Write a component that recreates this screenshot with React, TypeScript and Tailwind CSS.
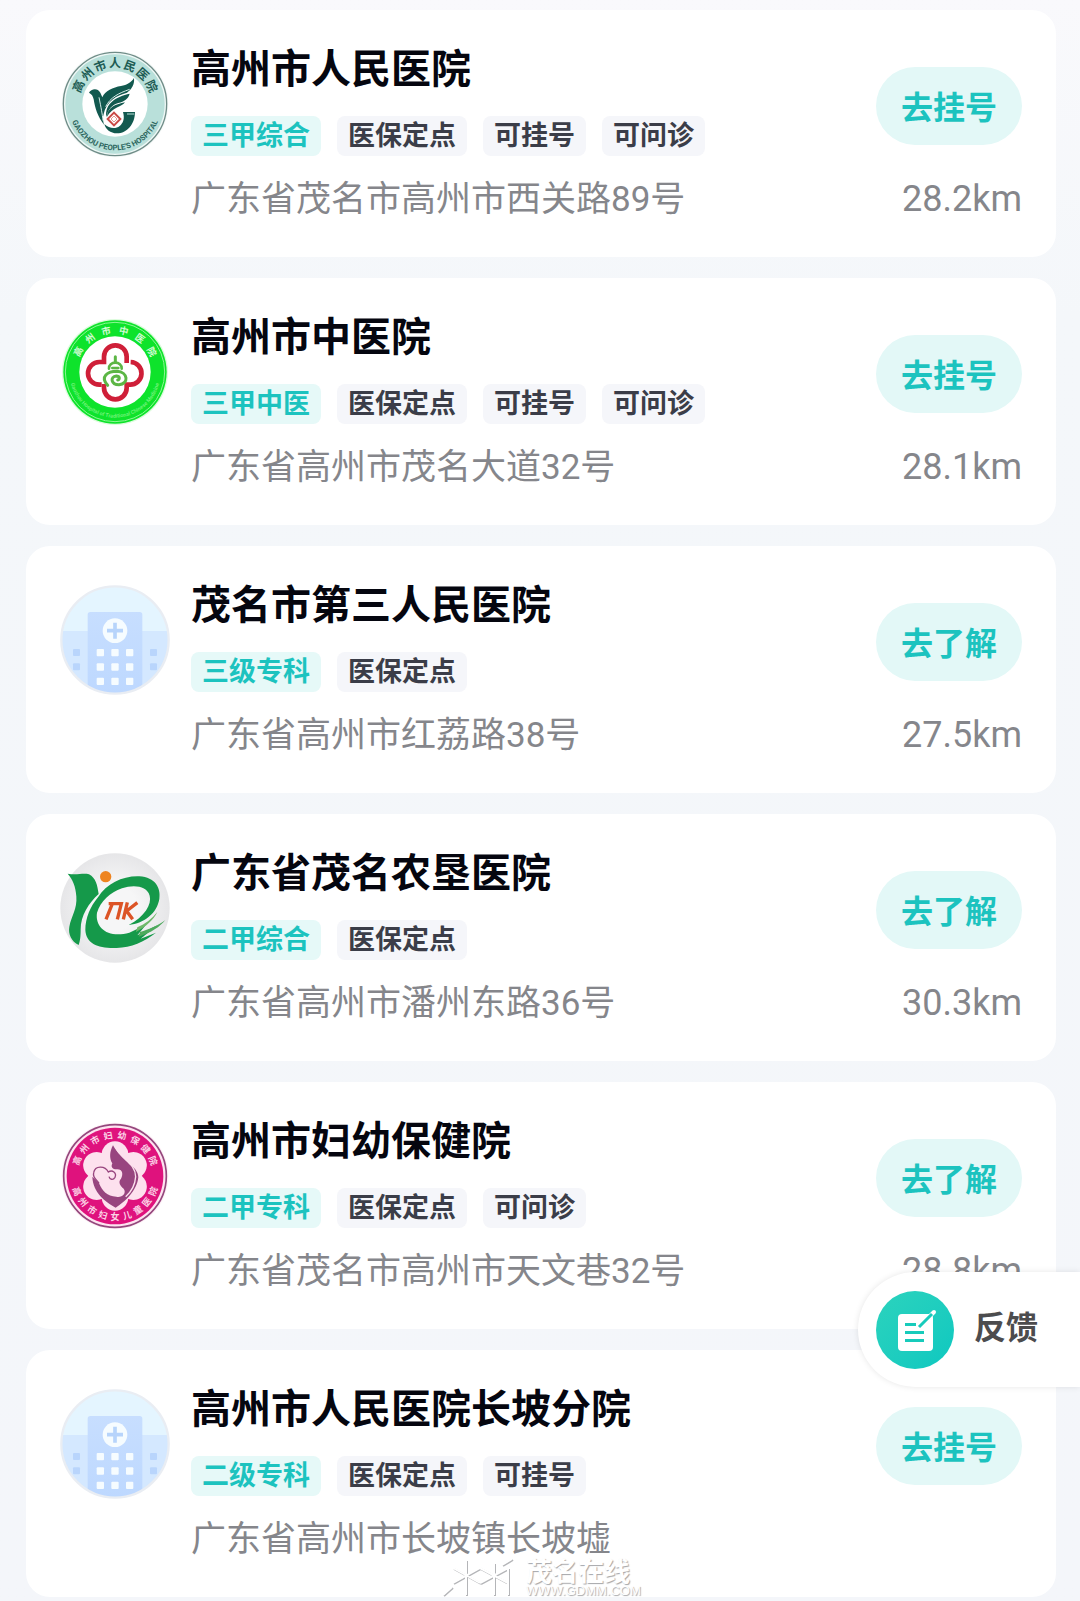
import type { ReactNode } from "react";

type Hospital = {
  id: number;
  name: string;
  level: string;
  tags: string[];
  address: string;
  distance?: string;
  action: string;
  logo: ReactNode;
};

type RingTextProps = {
  text: string;
  radius: number;
  spread: number;
  size: number;
  color: string;
  bottom?: boolean;
};

// One character per step around a badge, centered on 0,0
function RingText({ text, radius, spread, size, color, bottom }: RingTextProps) {
  const step = (spread * 2) / (text.length - 1);
  return (
    <g fill={color} fontSize={size} fontWeight={700} textAnchor="middle">
      {text.split("").map((char, i) => {
        const angle = bottom ? spread - i * step : -spread + i * step;
        return (
          <text
            key={i}
            y={(bottom ? radius : -radius) + Math.round(size * 0.36)}
            transform={`rotate(${angle})`}
          >
            {char}
          </text>
        );
      })}
    </g>
  );
}

function PeopleLogo() {
  return (
    <svg viewBox="-165 -165 330 330" className="size-full" aria-hidden="true">
      <circle r="160" fill="#f4f8f7" />
      <circle r="155" fill="#eef8f6" stroke="#6f8c87" strokeWidth="4" />
      <circle r="149" fill="#b9e0da" />
      <circle r="98" fill="#fff" />
      <RingText text="高州市人民医院" radius={122} spread={64} size={36} color="#1d5c54" />
      <path id="people-arc" d="M-139 0 A139 139 0 0 0 139 0" fill="none" />
      <text fontSize="23" fontWeight="700" fill="#2c665e" textAnchor="middle">
        <textPath href="#people-arc" startOffset="50%">
          GAOZHOU PEOPLE&apos;S HOSPITAL
        </textPath>
      </text>
      <g fill="#12594f">
        <path d="M-78 -34 C-72 -46 -52 -50 -44 -34 L-38 -20 C-30 -40 -6 -50 18 -54 C36 -57 48 -64 57 -78 C59 -58 50 -44 36 -34 C4 -26 -26 -8 -34 30 C-38 42 -36 50 -33 62 C-52 38 -60 12 -64 -14 C-66 -24 -70 -30 -78 -34Z" />
        <path d="M44 -31 C40 -16 28 -7 10 -3 C-8 2 -22 16 -26 40 C-32 -2 4 -22 44 -31Z" />
        <path d="M30 -5 C22 8 -8 10 -24 38 C-24 10 4 0 30 -5Z" />
        <path d="M24 24 H60 C60 60 36 88 6 88 C-14 88 -28 76 -32 60 C-18 74 2 76 14 66 C24 58 30 44 24 24Z" />
      </g>
      <path d="M-48 -20 C-42 10 -38 30 -36 50 M-28 8 C-14 -20 10 -32 44 -44" fill="none" stroke="#d5ebe7" strokeWidth="3" />
      <path d="M36 30 H58" stroke="#b9e0da" strokeWidth="3" />
      <path d="M-3 26 L16 45 L-3 64 L-22 45Z" fill="#fff" stroke="#c94a46" strokeWidth="6" />
      <path d="M-3 36 L6 45 L-3 54 L-12 45Z" fill="#fff" stroke="#e19a94" strokeWidth="3" />
    </svg>
  );
}

function ChineseMedicineLogo() {
  return (
    <svg viewBox="-165 -165 330 330" className="size-full" aria-hidden="true">
      <circle r="159" fill="#dcfcdc" />
      <circle r="155" fill="#0ee32b" />
      <circle r="149" fill="none" stroke="#8df795" strokeWidth="3" />
      <circle r="107" fill="#fff" />
      <RingText text="高州市中医院" radius={126} spread={61} size={28} color="#d2fbd4" />
      <path id="tcm-arc" d="M-137 0 A137 137 0 0 0 137 0" fill="none" />
      <text fontSize="16" fontWeight="700" fill="#6df277" textAnchor="middle">
        <textPath href="#tcm-arc" startOffset="50%">
          Gaozhou Hospital of Traditional Chinese Medicine
        </textPath>
      </text>
      <g fill="none" stroke="#cf1f38" strokeWidth="14">
        <path d="M35 -27 V-46 A34 34 0 0 0 -33 -46 V-30 H-47 A34 34 0 0 0 -47 38 H-40" />
        <path d="M-33 36 V48 A34 34 0 0 0 35 48 V38 H44 A34 34 0 0 0 47 -30" />
      </g>
      <g fill="none" stroke="#5cb645" strokeLinecap="round">
        <path d="M-18 -10 C-20 -34 22 -34 20 -10 M-8 -12 H10" strokeWidth="8" />
        <path d="M-22 40 C-46 14 -22 -2 6 -2 C40 0 42 36 12 38 C-12 38 -16 14 4 12 C14 12 16 22 8 24" strokeWidth="9" />
        <path d="M1 -46 V-32" strokeWidth="9" />
      </g>
    </svg>
  );
}

function DefaultLogo() {
  return (
    <svg viewBox="-165 -165 330 330" className="size-full" aria-hidden="true">
      <defs>
        <clipPath id="default-clip">
          <circle r="160" />
        </clipPath>
        <linearGradient id="default-tower" x1="0" y1="0" x2="0" y2="1">
          <stop offset="0" stopColor="#c7deff" />
          <stop offset="1" stopColor="#bdd8ff" />
        </linearGradient>
      </defs>
      <g clipPath="url(#default-clip)">
        <rect x="-165" y="-165" width="330" height="330" fill="#e4f5ff" />
        <rect x="-165" y="-27" width="330" height="200" fill="#d4e8ff" />
        <path d="M-82 165 V-76 Q-82 -84 -74 -84 H74 Q82 -84 82 -76 V165Z" fill="url(#default-tower)" />
        <g fill="#b9d5fc">
          <rect x="-126" y="27" width="21" height="21" rx="3" />
          <rect x="-126" y="70" width="21" height="21" rx="3" />
          <rect x="105" y="27" width="21" height="21" rx="3" />
          <rect x="105" y="70" width="21" height="21" rx="3" />
        </g>
        <g fill="#f6fcff">
          {[27, 70, 113].map((y) =>
            [-55, -11, 33].map((x) => (
              <rect key={`${x}-${y}`} x={x} y={y} width="22" height="22" rx="3" />
            )),
          )}
        </g>
      </g>
      <circle cy="-28" r="37" fill="#f6fcff" />
      <path d="M0 -52 V-4 M-24 -28 H24" stroke="#b7d4fb" strokeWidth="11" />
      <circle r="161" fill="none" stroke="#e9edf3" strokeWidth="7" />
    </svg>
  );
}

function FarmLogo() {
  return (
    <svg viewBox="30 25 330 330" className="size-full" aria-hidden="true">
      <defs>
        <radialGradient id="farm-bg">
          <stop offset="0.4" stopColor="#f6f6f7" />
          <stop offset="1" stopColor="#e6e6e8" />
        </radialGradient>
      </defs>
      <circle cx="195" cy="190" r="164" fill="url(#farm-bg)" />
      <circle cx="167" cy="96" r="17" fill="#ee8420" />
      <g fill="#15994a">
        <path d="M53 87 C80 92 100 84 117 89 C138 100 142 122 146 148 C116 176 92 212 92 254 C92 276 90 290 86 301 C64 290 54 268 58 246 C64 214 82 194 79 155 C77 125 68 104 53 87Z" />
        <path d="M144 158 C170 116 220 93 268 95 C316 98 333 130 328 163 C321 205 284 236 236 241 C284 216 306 178 299 153 C291 124 252 119 216 131 C180 144 152 170 141 204 C134 250 176 282 238 264 L288 240 L262 272 L322 242 L272 282 L318 264 C282 292 244 308 200 310 C146 312 108 298 106 256 C106 220 122 184 144 158Z" />
      </g>
      <path d="M258 262 C290 244 310 226 322 202 C306 222 286 238 262 248Z" fill="#6fb86a" />
      <path d="M266 276 C304 264 330 246 346 226 C326 242 296 254 270 262Z" fill="#4da95c" />
      <g fill="none" stroke="#dc5426" strokeWidth="10">
        <path d="M176 177 H214 L202 224 M186 180 L168 224" />
        <path d="M232 173 L220 224 M262 174 L230 199 L248 224" />
      </g>
    </svg>
  );
}

function MaternityLogo() {
  return (
    <svg viewBox="-165 -165 330 330" className="size-full" aria-hidden="true">
      <circle r="160" fill="#fdf0f6" />
      <circle r="154" fill="#fde3f0" stroke="#95477d" strokeWidth="5" />
      <circle r="145" fill="#df127d" />
      <g fill="#fde1ee">
        <circle r="80" />
        {[0, 60, 120, 180, 240, 300].map((angle) => (
          <circle key={angle} cy="-64" r="40" transform={`rotate(${angle})`} />
        ))}
      </g>
      <RingText text="高州市妇幼保健院" radius={123} spread={68} size={27} color="#fbd3e6" />
      <RingText text="高州市妇女儿童医院" radius={123} spread={68} size={27} color="#fbd3e6" bottom />
      <path d="M-6 -92 C-16 -74 -18 -52 -8 -38 C-14 -26 -6 -20 4 -20 C22 -22 26 -6 18 8 C8 18 16 30 26 38 C36 52 20 66 4 62 C-24 62 -38 44 -48 22 L-68 2 C-66 50 -30 76 2 95 C30 78 66 44 70 4 C70 -30 18 -46 -6 -92Z" fill="#98457f" />
      <path d="M2 -88 C12 -52 62 -40 62 2 C60 30 46 50 32 62" fill="none" stroke="#fde1ee" strokeWidth="4" />
      <path d="M-64 -10 C-60 -32 -30 -32 -20 -12 C-8 -20 6 -10 0 4 C-6 14 -16 10 -18 2 M-48 22 C-54 10 -68 8 -64 -10" fill="none" stroke="#98457f" strokeWidth="4" />
    </svg>
  );
}

function FeedbackIcon() {
  return (
    <svg viewBox="0 0 78 78" className="size-full" aria-hidden="true">
      <rect x="22" y="23" width="35" height="37" rx="4" fill="#fff" />
      <path d="M29 33.500 H40 M29 41.500 H48 M29 49.500 H48" stroke="#17cbbb" strokeWidth="3" />
      <path d="M43 36 L58 21" stroke="#fff" strokeWidth="4" strokeLinecap="round" />
      <path d="M43 36 L56 23" stroke="#17cbbb" strokeWidth="3" />
    </svg>
  );
}

const HOSPITALS: Hospital[] = [
  {
    id: 1,
    name: "高州市人民医院",
    level: "三甲综合",
    tags: ["医保定点", "可挂号", "可问诊"],
    address: "广东省茂名市高州市西关路89号",
    distance: "28.2km",
    action: "去挂号",
    logo: <PeopleLogo />,
  },
  {
    id: 2,
    name: "高州市中医院",
    level: "三甲中医",
    tags: ["医保定点", "可挂号", "可问诊"],
    address: "广东省高州市茂名大道32号",
    distance: "28.1km",
    action: "去挂号",
    logo: <ChineseMedicineLogo />,
  },
  {
    id: 3,
    name: "茂名市第三人民医院",
    level: "三级专科",
    tags: ["医保定点"],
    address: "广东省高州市红荔路38号",
    distance: "27.5km",
    action: "去了解",
    logo: <DefaultLogo />,
  },
  {
    id: 4,
    name: "广东省茂名农垦医院",
    level: "二甲综合",
    tags: ["医保定点"],
    address: "广东省高州市潘州东路36号",
    distance: "30.3km",
    action: "去了解",
    logo: <FarmLogo />,
  },
  {
    id: 5,
    name: "高州市妇幼保健院",
    level: "二甲专科",
    tags: ["医保定点", "可问诊"],
    address: "广东省茂名市高州市天文巷32号",
    distance: "28.8km",
    action: "去了解",
    logo: <MaternityLogo />,
  },
  {
    id: 6,
    name: "高州市人民医院长坡分院",
    level: "二级专科",
    tags: ["医保定点", "可挂号"],
    address: "广东省高州市长坡镇长坡墟",
    action: "去挂号",
    logo: <DefaultLogo />,
  },
];

function HospitalCard({ hospital }: { hospital: Hospital }) {
  return (
    <li className="flex rounded-3xl bg-white px-[34px] pt-[34px] pb-[31px]">
      <div className="mt-[5px] mr-[21px] size-[110px] shrink-0">{hospital.logo}</div>

      <div className="min-w-0 flex-1">
        <h2 className="text-[40px] leading-[52px] font-bold text-[#05060f]">{hospital.name}</h2>
        <div className="mt-5 flex gap-4 text-[27px] leading-[40px] font-bold">
          <span className="rounded-lg bg-[#e6f9f8] px-[11px] text-[#1cc3bf]">{hospital.level}</span>
          {hospital.tags.map((tag) => (
            <span key={tag} className="rounded-lg bg-[#f5f6fa] px-[11px] text-[#3b3d48]">
              {tag}
            </span>
          ))}
        </div>
        <p className="mt-[18px] text-[35px] leading-[52px] text-[#85868b]">{hospital.address}</p>
      </div>

      <div className="flex shrink-0 flex-col items-end pt-[23px]">
        <button
          type="button"
          className="h-[78px] rounded-full bg-[#e3f8f7] px-[25px] pt-1 text-[32px] font-bold text-[#1cc3bf]"
        >
          {hospital.action}
        </button>
        {hospital.distance && (
          <span className="mt-[30px] text-[36px] leading-[48px] text-[#85868b]">{hospital.distance}</span>
        )}
      </div>
    </li>
  );
}

function Watermark() {
  return (
    <div className="pointer-events-none absolute bottom-[3px] left-[442px] flex items-end gap-3 text-white">
      <svg viewBox="0 0 72 40" className="h-10 w-[72px]" fill="none" aria-hidden="true">
        <path
          d="M12 11 L39 26 M12 26 L39 11 L67 26 M39 26 L67 11 M25 3 V38 M53 6 V38 M67 11 V38 M2 38 L11 30 M61 8 L71 2"
          stroke="#b4b5b8"
          strokeWidth="2"
        />
        <path
          d="M11 10 L38 25 M11 25 L38 10 L66 25 M38 25 L66 10 M24 2 V37 M52 5 V37 M66 10 V37 M1 37 L10 29 M60 7 L70 1"
          stroke="#fff"
          strokeWidth="2"
        />
      </svg>
      <div className="text-shadow-[1px_1px_1px_#a5a6a9]">
        <p className="text-[26px] leading-[24px] font-bold">茂名在线</p>
        <p className="font-['Liberation_Sans'] text-[13px] leading-[14px]">WWW.GDMM.COM</p>
      </div>
    </div>
  );
}

export default function App() {
  return (
    <main className="relative min-h-screen bg-linear-to-b from-[#f9f9fc] via-[#f4f7fa] via-20% to-[#f4f6fa] pt-[10px] pr-6 pb-1 pl-[26px] font-[Roboto,'Noto_Sans_CJK_SC',sans-serif]">
      <ul className="flex flex-col gap-[21px]">
        {HOSPITALS.map((hospital) => (
          <HospitalCard key={hospital.id} hospital={hospital} />
        ))}
      </ul>

      <button
        type="button"
        className="absolute right-0 bottom-[214px] flex h-[115px] items-center gap-5 rounded-l-full bg-white pr-[42px] pl-[18px] text-[32px] font-bold text-[#4c4c4e] shadow-[0_0_6px_rgba(0,0,0,0.1)]"
      >
        <span className="size-[78px] rounded-full bg-linear-to-br from-[#2bd3bd] to-[#0cc8c0]">
          <FeedbackIcon />
        </span>
        <span className="pb-1">反馈</span>
      </button>

      <Watermark />
    </main>
  );
}
